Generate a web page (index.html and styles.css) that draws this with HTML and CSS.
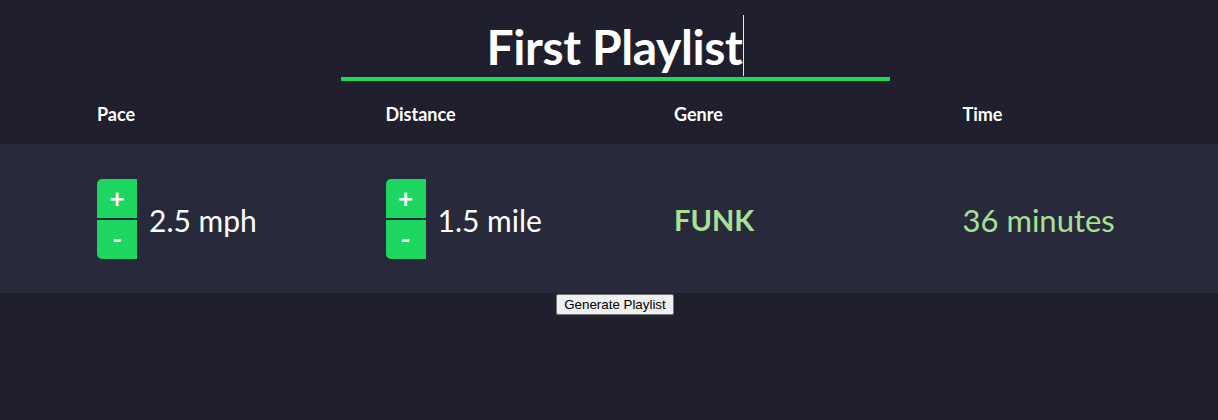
FILE: index.html
```html
<!DOCTYPE html>
<html>
<head>
<meta charset="utf-8">
<link rel="stylesheet" href="styles.css">
</head>
<body>
<div class="title-wrap">
  <div class="title-input"><span class="title-text">First Playlist</span><span class="caret"></span></div>
</div>
<div class="row head">
  <div class="label">Pace</div>
  <div class="label">Distance</div>
  <div class="label">Genre</div>
  <div class="label">Time</div>
</div>
<div class="row body">
  <div class="cell">
    <div class="stepper"><button class="step up">+</button><button class="step down">-</button></div>
    <span class="value">2.5 mph</span>
  </div>
  <div class="cell">
    <div class="stepper"><button class="step up">+</button><button class="step down">-</button></div>
    <span class="value">1.5 mile</span>
  </div>
  <div class="cell"><span class="genre">FUNK</span></div>
  <div class="cell"><span class="time">36 minutes</span></div>
</div>
<div class="actions"><button class="generate">Generate Playlist</button></div>
</body>
</html>
```
FILE: styles.css
```css
html, body {
  margin: 0;
  padding: 0;
  background: #1f1f2e;
  font-family: Lato, "Liberation Sans", sans-serif;
  color: #ffffff;
}
.title-wrap {
  display: flex;
  justify-content: center;
  padding-top: 11px;
  height: 81px;
  box-sizing: border-box;
}
.title-input {
  width: 549px;
  height: 66px;
  border-bottom: 4px solid #1ed760;
  box-sizing: content-box;
  display: flex;
  justify-content: center;
  align-items: flex-start;
  margin-left: 13px;
}
.title-text {
  font-size: 48px;
  font-weight: 700;
  line-height: 62px;
  letter-spacing: -0.4px;
  margin-top: 5px;
}
.caret {
  display: inline-block;
  width: 1px;
  height: 61px;
  background: #e8e8e8;
  margin-left: 1px;
  margin-top: 4px;
}
.row {
  display: grid;
  grid-template-columns: repeat(4, 288.5px);
  padding-left: 97px;
}
.head {
  height: 63px;
  align-items: center;
}
.label {
  font-size: 18px;
  font-weight: 700;
  padding-top: 3px;
}
.body {
  background: #282a3c;
  height: 149px;
  align-items: center;
}
.cell {
  display: flex;
  align-items: center;
}
.stepper {
  display: flex;
  flex-direction: column;
  gap: 2px;
  width: 40px;
  margin-right: 12px;
}
.step {
  border: none;
  margin: 0;
  padding: 0;
  width: 40px;
  height: 39px;
  background: #1ed760;
  color: #ffffff;
  font-family: Lato, "Liberation Sans", sans-serif;
  font-size: 26px;
  font-weight: 700;
  line-height: 36px;
}
.step.up { border-top-left-radius: 5px; }
.step.down { border-bottom-left-radius: 5px; }
.value {
  font-size: 30px;
  font-weight: 400;
  padding-top: 2px;
}
.genre {
  font-size: 29px;
  font-weight: 700;
  color: #a6e194;
  padding-top: 2px;
}
.time {
  font-size: 31px;
  font-weight: 400;
  color: #a6e194;
  padding-top: 2px;
}
.actions {
  display: flex;
  justify-content: center;
  padding-top: 1px;
  padding-left: 12px;
}
.generate {
  font-family: "Liberation Sans", Arial, sans-serif;
  font-size: 13.33px;
  height: 21px;
  padding: 1px 7px;
  background: #efefef;
  border: 1px solid #767676;
  border-radius: 2px;
  color: #000;
}
```
